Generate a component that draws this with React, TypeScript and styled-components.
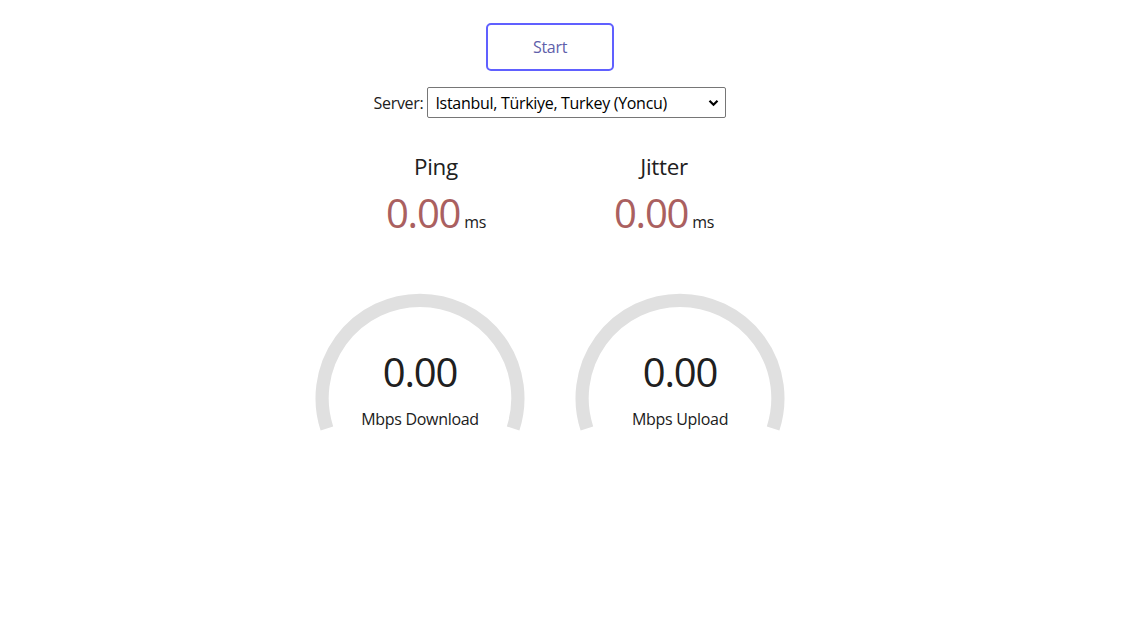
import React from "react";
import styled, { createGlobalStyle } from "styled-components";

const GlobalStyle = createGlobalStyle`
  html, body {
    margin: 0;
    padding: 0;
    background: #ffffff;
  }
  body {
    font-family: "Open Sans", "Noto Sans", sans-serif;
    font-size: 16px;
    letter-spacing: -0.3px;
    color: #202020;
  }
`;

const Page = styled.main`
  width: 1100px;
  padding-top: 23px;
  display: flex;
  flex-direction: column;
  align-items: center;
  text-align: center;
`;

const StartButton = styled.button`
  box-sizing: border-box;
  width: 128px;
  height: 48px;
  border: 2.4px solid #6060ff;
  border-radius: 5px;
  background: transparent;
  color: #6060aa;
  font-family: inherit;
  font-size: 16px;
  letter-spacing: -0.3px;
  cursor: pointer;
  padding: 0;
`;

const ServerRow = styled.div`
  margin-top: 16px;
  display: flex;
  align-items: center;
  gap: 4px;
  font-size: 16px;
`;

const SelectWrap = styled.div`
  position: relative;
  display: inline-block;
`;

const ServerSelect = styled.select`
  appearance: none;
  -webkit-appearance: none;
  box-sizing: border-box;
  width: 299px;
  height: 31px;
  padding: 0 24px 0 7px;
  border: 1px solid #767676;
  border-radius: 2px;
  background: #ffffff;
  color: #000000;
  font-family: inherit;
  font-size: 16px;
  letter-spacing: -0.3px;
`;

const Chevron = styled.svg`
  position: absolute;
  right: 7px;
  top: 50%;
  transform: translateY(-50%);
  pointer-events: none;
`;

const TestGroup = styled.div`
  display: flex;
  justify-content: center;
  gap: 4px;
`;

const SmallArea = styled.div`
  box-sizing: border-box;
  width: 224px;
  height: 112px;
  display: flex;
  flex-direction: column;
  align-items: center;
`;

const TestName = styled.div`
  font-size: 22.4px;
  line-height: 30px;
`;

const ValueLine = styled.div`
  margin-top: 4px;
  display: flex;
  align-items: baseline;
  justify-content: center;
  gap: 4px;
`;

const SmallValue = styled.span`
  font-size: 40px;
  line-height: 53px;
  letter-spacing: -1.2px;
  color: #aa6060;
`;

const Unit = styled.span`
  font-size: 16px;
`;

const GaugeArea = styled.div`
  position: relative;
  width: 256px;
  height: 200px;
`;

const GaugeSvg = styled.svg`
  position: absolute;
  top: 0;
  left: 0;
`;

const GaugeValue = styled.div`
  position: absolute;
  left: 0;
  width: 100%;
  bottom: 64px;
  font-size: 40px;
  line-height: 53px;
  letter-spacing: -1.2px;
  color: #202020;
`;

const GaugeUnit = styled.div`
  position: absolute;
  left: 0;
  width: 100%;
  bottom: 32px;
  font-size: 16px;
  line-height: 21px;
  color: #202020;
`;

const PingGroup = styled(TestGroup)`
  margin-top: 34px;
`;

const GaugeGroup = styled(TestGroup)`
  margin-top: -2px;
`;

const Gauge: React.FC<{ unit: string }> = ({ unit }) => {
  const cx = 128;
  const cy = 136.2;
  const r = 97.9;
  const a1 = -1.1 * Math.PI;
  const a2 = 0.1 * Math.PI;
  const x1 = cx + r * Math.cos(a1);
  const y1 = cy + r * Math.sin(a1);
  const x2 = cx + r * Math.cos(a2);
  const y2 = cy + r * Math.sin(a2);
  return (
    <GaugeArea>
      <GaugeSvg width="256" height="200" viewBox="0 0 256 200">
        <path
          d={`M ${x1} ${y1} A ${r} ${r} 0 1 1 ${x2} ${y2}`}
          fill="none"
          stroke="#E0E0E0"
          strokeWidth="13.2"
        />
      </GaugeSvg>
      <GaugeValue>0.00</GaugeValue>
      <GaugeUnit>{unit}</GaugeUnit>
    </GaugeArea>
  );
};

const Small: React.FC<{ name: string }> = ({ name }) => (
  <SmallArea>
    <TestName>{name}</TestName>
    <ValueLine>
      <SmallValue>0.00</SmallValue>
      <Unit>ms</Unit>
    </ValueLine>
  </SmallArea>
);

export default function App() {
  return (
    <>
      <GlobalStyle />
      <Page>
        <StartButton>Start</StartButton>
        <ServerRow>
          <span>Server:</span>
          <SelectWrap>
            <ServerSelect defaultValue="yoncu">
              <option value="yoncu">Istanbul, Türkiye, Turkey (Yoncu)</option>
            </ServerSelect>
            <Chevron width="11" height="8" viewBox="0 0 11 8">
              <path d="M1.5 1.8 L5.5 5.8 L9.5 1.8" fill="none" stroke="#000" strokeWidth="2.2" />
            </Chevron>
          </SelectWrap>
        </ServerRow>
        <PingGroup>
          <Small name="Ping" />
          <Small name="Jitter" />
        </PingGroup>
        <GaugeGroup>
          <Gauge unit="Mbps Download" />
          <Gauge unit="Mbps Upload" />
        </GaugeGroup>
      </Page>
    </>
  );
}
